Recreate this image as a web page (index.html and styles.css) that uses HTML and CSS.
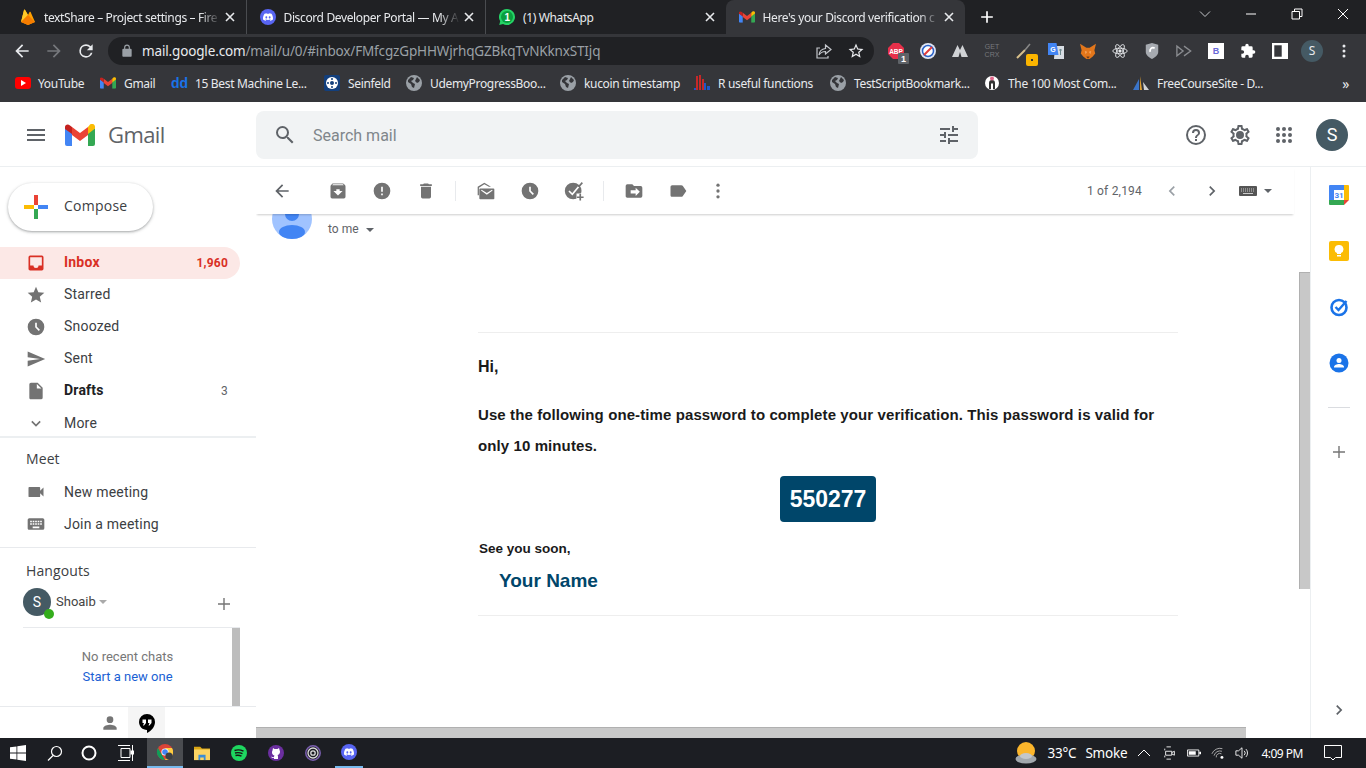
FILE: index.html
```html
<!DOCTYPE html>
<html lang="en">
<head>
    <meta charset="UTF-8">
    <title>Here's your Discord verification code - Gmail</title>
    <link rel="stylesheet" href="styles.css">
</head>
<body>
    <svg class="defs" width="0" height="0">
        <symbol id="discord" viewBox="0 0 24 24"><path d="M20.317 4.37a19.791 19.791 0 0 0-4.885-1.515.074.074 0 0 0-.079.037c-.21.375-.444.864-.608 1.25a18.27 18.27 0 0 0-5.487 0 12.64 12.64 0 0 0-.617-1.25.077.077 0 0 0-.079-.037A19.736 19.736 0 0 0 3.677 4.37a.07.07 0 0 0-.032.027C.533 9.046-.32 13.58.099 18.057a.082.082 0 0 0 .031.057 19.9 19.9 0 0 0 5.993 3.03.078.078 0 0 0 .084-.028 14.09 14.09 0 0 0 1.226-1.994.076.076 0 0 0-.041-.106 13.107 13.107 0 0 1-1.872-.892.077.077 0 0 1-.008-.128 10.2 10.2 0 0 0 .372-.292.074.074 0 0 1 .077-.01c3.928 1.793 8.18 1.793 12.062 0a.074.074 0 0 1 .078.01c.12.098.246.198.373.292a.077.077 0 0 1-.006.127 12.299 12.299 0 0 1-1.873.892.077.077 0 0 0-.041.107c.36.698.772 1.362 1.225 1.993a.076.076 0 0 0 .084.028 19.839 19.839 0 0 0 6.002-3.03.077.077 0 0 0 .032-.054c.5-5.177-.838-9.674-3.549-13.66a.061.061 0 0 0-.031-.03zM8.02 15.33c-1.183 0-2.157-1.085-2.157-2.419 0-1.333.956-2.419 2.157-2.419 1.21 0 2.176 1.096 2.157 2.42 0 1.333-.956 2.418-2.157 2.418zm7.975 0c-1.183 0-2.157-1.085-2.157-2.419 0-1.333.955-2.419 2.157-2.419 1.21 0 2.176 1.096 2.157 2.42 0 1.333-.946 2.418-2.157 2.418z"/></symbol>
        <symbol id="m-logo" viewBox="0 0 30 22">
            <path fill="#4285f4" d="M0 4v16a2 2 0 0 0 2 2h5V9z"/>
            <path fill="#34a853" d="M23 9v13h5a2 2 0 0 0 2-2V4z"/>
            <path fill="#ea4335" d="M7 11V3l8 6 8-6v8l-8 6z"/>
            <path fill="#fbbc04" d="M23 3v7l7-5.500V3c0-3-3-4-5-2.500z"/>
            <path fill="#c5221f" d="M0 3v2l7 5V3L5 1.500C3-.2 0 .6 0 3z"/>
        </symbol>
        <symbol id="globe" viewBox="0 0 16 16">
            <circle cx="8" cy="8" r="8" fill="#9aa0a6"/>
            <path fill="#35363a" d="M2 5l3-3 3 1-1 2-2 1 2 2 2 1-1 4-2-1-1-3-3-2zM11 2l3 3-1 2-2 1-2-2 1-2z"/>
        </symbol>
        <symbol id="gear" viewBox="0 0 24 24"><path d="M19.430 12.980c.04-.32.07-.64.07-.98s-.03-.66-.07-.98l2.110-1.650c.19-.15.24-.42.12-.64l-2-3.460c-.12-.22-.39-.3-.61-.22l-2.490 1c-.52-.4-1.080-.73-1.690-.98l-.38-2.650C14.460 2.180 14.250 2 14 2h-4c-.25 0-.46.18-.49.42l-.38 2.650c-.61.25-1.170.59-1.690.98l-2.490-1c-.23-.09-.49 0-.61.22l-2 3.460c-.13.22-.07.49.12.64l2.110 1.650c-.04.32-.07.65-.07.98s.03.66.07.98l-2.110 1.650c-.19.15-.24.42-.12.64l2 3.460c.12.22.39.3.61.22l2.490-1c.52.4 1.080.73 1.690.98l.38 2.650c.03.24.24.42.49.42h4c.25 0 .46-.18.49-.42l.38-2.650c.61-.25 1.170-.59 1.690-.98l2.490 1c.23.09.49 0 .61-.22l2-3.460c.12-.22.07-.49-.12-.64zm-1.980-1.710c.04.31.05.52.05.73s-.02.43-.05.73l-.14 1.130.89.7 1.080.84-.7 1.210-1.270-.51-1.040-.42-.9.68c-.43.32-.84.56-1.250.73l-1.060.43-.16 1.130-.2 1.350h-1.400l-.19-1.350-.16-1.130-1.060-.43c-.43-.18-.83-.41-1.230-.71l-.91-.7-1.060.43-1.270.51-.7-1.210 1.080-.84.89-.7-.14-1.130c-.03-.31-.05-.54-.05-.74s.02-.43.05-.73l.14-1.130-.89-.7-1.080-.84.7-1.210 1.270.51 1.040.42.9-.68c.43-.32.84-.56 1.250-.73l1.060-.43.16-1.130.2-1.350h1.390l.19 1.350.16 1.130 1.060.43c.43.18.83.41 1.230.71l.91.7 1.060-.43 1.270-.51.7 1.210-1.070.85-.89.7zM12 8a4 4 0 1 0 0 8 4 4 0 0 0 0-8z"/></symbol>
        <symbol id="tab-close" viewBox="0 0 10 10"><path fill="none" stroke="#e8eaed" stroke-width="1.600" d="M1 1l8 8M9 1L1 9"/></symbol>
    </svg>

    <!-- browser tabs -->
    <div class="tabstrip">
        <div class="tab">
            <svg class="fav" viewBox="0 0 16 16"><path fill="#ffa000" d="M1 13L4 1c.2-.7.8-.7 1.100 0L8 6l1.500-3c.3-.5.8-.5 1.100 0L15 13l-7 3z"/><path fill="#ffca28" d="M1 13L8 6 5.100 1C4.800.3 4.200.3 4 1z"/><path fill="#f57c00" d="M1 13l7 3 7-3L8 6z"/></svg>
            <span class="tab-title">textShare – Project settings – Fire</span>
            <svg class="tab-x"><use href="#tab-close"/></svg>
        </div>
        <div class="tab">
            <svg class="fav" viewBox="0 0 16 16"><circle cx="8" cy="8" r="8" fill="#5865f2"/><svg x="3" y="3" width="10" height="10" fill="#fff"><use href="#discord"/></svg></svg>
            <span class="tab-title">Discord Developer Portal — My A</span>
            <svg class="tab-x"><use href="#tab-close"/></svg>
        </div>
        <div class="tab">
            <svg class="fav" viewBox="0 0 16 16"><path fill="#25d366" d="M8 0a8 8 0 0 0-6.800 12.200L.2 16l3.900-1A8 8 0 1 0 8 0z"/><circle cx="8" cy="8" r="6" fill="#0a9e3f"/><text x="8" y="11.500" class="fav-num">1</text></svg>
            <span class="tab-title">(1) WhatsApp</span>
            <svg class="tab-x"><use href="#tab-close"/></svg>
        </div>
        <div class="tab active">
            <svg class="fav" viewBox="0 0 30 22"><use href="#m-logo"/></svg>
            <span class="tab-title">Here's your Discord verification c</span>
            <svg class="tab-x"><use href="#tab-close"/></svg>
        </div>
        <svg class="newtab" viewBox="0 0 24 24" fill="#fff"><path d="M19 13h-6v6h-2v-6H5v-2h6V5h2v6h6z"/></svg>
        <div class="winbtns">
            <svg viewBox="0 0 12 12" fill="none" stroke="#c4c6ca"><path d="M1 3.500l5 5 5-5"/></svg>
            <svg viewBox="0 0 12 12" fill="none" stroke="#fff"><path d="M1 6h10"/></svg>
            <svg viewBox="0 0 12 12" fill="none" stroke="#fff"><path d="M1 3.500h7.500V11H1zM3.500 3.500V1H11v7.500H8.500"/></svg>
            <svg viewBox="0 0 12 12" fill="none" stroke="#fff"><path d="M1 1l10 10M11 1L1 11"/></svg>
        </div>
    </div>

    <!-- address bar -->
    <div class="toolbar">
        <svg class="nav-ic" viewBox="0 0 24 24" fill="#e8eaed"><path d="M20 11H7.830l5.590-5.590L12 4l-8 8 8 8 1.410-1.410L7.830 13H20z"/></svg>
        <svg class="nav-ic" viewBox="0 0 24 24" fill="#76787c"><path d="M12 4l-1.410 1.410L16.170 11H4v2h12.170l-5.580 5.590L12 20l8-8z"/></svg>
        <svg class="nav-ic" viewBox="0 0 24 24" fill="#e8eaed"><path d="M17.650 6.350A7.960 7.960 0 0 0 12 4a8 8 0 1 0 7.730 10h-2.080A6 6 0 1 1 12 6c1.660 0 3.140.69 4.220 1.780L13 11h7V4z"/></svg>
        <div class="omnibox">
            <svg class="lock" viewBox="0 0 24 24" fill="#9aa0a6"><path d="M18 8h-1V6A5 5 0 0 0 7 6v2H6a2 2 0 0 0-2 2v10c0 1.100.9 2 2 2h12a2 2 0 0 0 2-2V10a2 2 0 0 0-2-2zM9 6a3 3 0 0 1 6 0v2H9z"/></svg>
            <span class="url"><span class="host">mail.google.com</span>/mail/u/0/#inbox/FMfcgzGpHHWjrhqGZBkqTvNKknxSTIjq</span>
            <svg class="omni-ic" viewBox="0 0 18 18" fill="none" stroke="#c4c7cc" stroke-width="1.200"><path d="M10.500 3l5.500 4.500-5.500 4.500V9.500c-3 0-5 1-6.500 3.500.3-3.500 2.500-6 6.500-6.500zM13 14v2H2V6h3"/></svg>
            <svg class="omni-ic star" viewBox="0 0 24 24" fill="#e8eaed"><path d="M22 9.240l-7.190-.62L12 2 9.190 8.630 2 9.240l5.460 4.730L5.820 21 12 17.270 18.180 21l-1.630-7.030zM12 15.400l-3.760 2.270 1-4.280-3.320-2.880 4.380-.38L12 6.100l1.710 4.040 4.380.38-3.320 2.880 1 4.280z"/></svg>
        </div>
        <div class="exts">
            <div class="ext"><svg viewBox="0 0 16 16"><path fill="#e8304a" d="M5 0h6l5 5v6l-5 5H5l-5-5V5z"/><text x="8" y="10.500" class="abp">ABP</text><rect x="10" y="10" width="11" height="11" rx="1" fill="#5f6368"/><text x="15.500" y="19" class="abp-n">1</text></svg></div>
            <div class="ext"><svg viewBox="0 0 16 16"><circle cx="8" cy="8" r="8" fill="#dfe6f5"/><circle cx="8" cy="8" r="5.500" fill="#fff" stroke="#2a62c8" stroke-width="1.500"/><path stroke="#e23b3b" stroke-width="2" d="M4 12l8-8"/></svg></div>
            <div class="ext"><svg viewBox="0 0 16 16"><path fill="#d0d2d5" d="M0 14L5.500 2 8 7l2.500-5L16 14H9.500L8 9l-1.500 5z"/></svg></div>
            <div class="ext"><span class="getcrx">GET<br>CRX</span></div>
            <div class="ext"><svg viewBox="0 0 16 16"><path stroke="#d8c08a" stroke-width="2" d="M1 15l8-8"/><path stroke="#888" stroke-width="1.500" d="M9 7l5-6"/><rect x="10" y="11" width="12" height="12" rx="2" fill="#fbb500"/><rect x="15" y="16" width="2" height="2" fill="#333"/></svg></div>
            <div class="ext"><svg viewBox="0 0 16 16"><path fill="#d8dde3" d="M7 3h9v13H6z"/><path fill="#4285f4" d="M0 0h8.500l2 12H0z"/><text x="5" y="8.500" class="gt">G</text><path stroke="#6f8b8f" d="M11 7h3M12.500 6v6"/></svg></div>
            <div class="ext"><svg viewBox="0 0 20 20"><path fill="#e2761b" d="M0 1l8 5h4l8-5-2 8 1 4-3 4-4 3H8l-4-3-3-4 1-4z"/><path fill="#f6a45c" d="M6 10l3 1-2 3zM14 10l-3 1 2 3z"/><path fill="#763d16" d="M8 17h4l-1 2H9z"/></svg></div>
            <div class="ext"><svg viewBox="0 0 20 20" fill="none" stroke="#e8eaed" stroke-width="1.100"><ellipse cx="10" cy="10" rx="9" ry="3.500"/><ellipse cx="10" cy="10" rx="9" ry="3.500" transform="rotate(60 10 10)"/><ellipse cx="10" cy="10" rx="9" ry="3.500" transform="rotate(120 10 10)"/><circle cx="10" cy="10" r="1.500" fill="#e8eaed"/></svg></div>
            <div class="ext"><svg viewBox="0 0 16 18"><path fill="#a6aab0" d="M1 2l7-2 7 2v8c0 4-4 6-7 8-3-2-7-4-7-8z"/><path fill="none" stroke="#fff" stroke-width="2" d="M11 6c-3-2-6 1-5 4"/></svg></div>
            <div class="ext"><svg viewBox="0 0 18 14" fill="none" stroke="#8a8c90" stroke-width="1.500"><path d="M1 1.500l7 5.500-7 5.500zM9 1.500l7.500 5.500-7.500 5.500"/></svg></div>
            <div class="ext"><span class="bs-ext">B</span></div>
            <div class="ext"><svg viewBox="0 0 24 24" fill="#fff"><path d="M20.500 11H19V7a2 2 0 0 0-2-2h-4V3.500a2.500 2.500 0 0 0-5 0V5H4a2 2 0 0 0-2 2v3.800h1.500a2.700 2.700 0 0 1 0 5.400H2V20c0 1.100.9 2 2 2h3.800v-1.500a2.700 2.700 0 0 1 5.400 0V22H17a2 2 0 0 0 2-2v-4h1.500a2.500 2.500 0 0 0 0-5z"/></svg></div>
            <div class="ext"><svg viewBox="0 0 14 14"><path fill="#fff" d="M0 0h14v14H0z"/><path fill="#35363a" d="M2 2h6.500v10H2z"/></svg></div>
            <div class="ext"><span class="ava-s">S</span></div>
            <div class="ext"><svg viewBox="0 0 16 16" fill="#e8eaed"><circle cx="8" cy="3" r="1.500"/><circle cx="8" cy="8" r="1.500"/><circle cx="8" cy="13" r="1.500"/></svg></div>
        </div>
    </div>

    <!-- bookmarks -->
    <div class="bookmarks">
        <div class="bm"><svg viewBox="0 0 16 12"><rect width="16" height="12" rx="3" fill="#f00"/><path fill="#fff" d="M6 3l5 3-5 3z"/></svg><span>YouTube</span></div>
        <div class="bm"><svg viewBox="0 0 30 22"><use href="#m-logo"/></svg><span>Gmail</span></div>
        <div class="bm"><b class="dd">dd</b><span>15 Best Machine Le...</span></div>
        <div class="bm"><svg viewBox="0 0 16 16"><rect width="16" height="16" rx="2" fill="#123f7d"/><circle cx="8" cy="8" r="6" fill="#fff"/><circle cx="8" cy="8" r="2" fill="#123f7d"/><circle cx="8" cy="4" r="1" fill="#123f7d"/><circle cx="12" cy="8" r="1" fill="#123f7d"/><circle cx="8" cy="12" r="1" fill="#123f7d"/><circle cx="4" cy="8" r="1" fill="#123f7d"/></svg><span>Seinfeld</span></div>
        <div class="bm"><svg viewBox="0 0 16 16"><use href="#globe"/></svg><span>UdemyProgressBoo...</span></div>
        <div class="bm"><svg viewBox="0 0 16 16"><use href="#globe"/></svg><span>kucoin timestamp</span></div>
        <div class="bm"><svg viewBox="0 0 16 16"><path fill="#c62828" d="M2 1h2v14H2zM5 0h2v15H5zM8 4h2v11H8z"/><path fill="#1e58c8" d="M10 8h2v7h-2zM13 11h3v4h-3zM0 13h2v2H0z"/></svg><span>R useful functions</span></div>
        <div class="bm"><svg viewBox="0 0 16 16"><use href="#globe"/></svg><span>TestScriptBookmark...</span></div>
        <div class="bm"><svg viewBox="0 0 16 16"><circle cx="8" cy="8" r="7" fill="#fff"/><path fill="#333" d="M5 14V8a3 3 0 0 1 6 0v6H9V8.500H7V14z"/><circle cx="8" cy="3.500" r="2" fill="#e0668a"/></svg><span>The 100 Most Com...</span></div>
        <div class="bm"><svg viewBox="0 0 16 16"><path fill="#3a74c8" d="M0 15L6 4v11z"/><path fill="#e0a030" d="M7 1l2 14H7z"/><path fill="#d0d2d5" d="M10 7l6 8h-5z"/></svg><span>FreeCourseSite - D...</span></div>
        <span class="bm-more">»</span>
    </div>

    <!-- gmail header -->
    <header class="gm-header">
        <div class="gm-brand">
            <svg class="ic24" viewBox="0 0 24 24" fill="#5f6368"><path d="M3 18h18v-2H3zm0-5h18v-2H3zm0-7v2h18V6z"/></svg>
            <svg class="gm-logo" viewBox="0 0 30 22"><use href="#m-logo"/></svg>
            <span class="gm-word">Gmail</span>
        </div>
        <div class="search">
            <svg class="ic24" viewBox="0 0 24 24" fill="#5f6368"><path d="M15.500 14h-.79l-.28-.27A6.470 6.470 0 0 0 16 9.500 6.500 6.500 0 1 0 9.500 16c1.610 0 3.090-.59 4.230-1.570l.27.28v.79l5 4.990L20.490 19zm-6 0a4.500 4.500 0 1 1 0-9 4.500 4.500 0 0 1 0 9z"/></svg>
            <span class="search-text">Search mail</span>
            <svg class="ic24" viewBox="0 0 24 24" fill="#5f6368"><path d="M3 17v2h6v-2zM3 5v2h10V5zm10 16v-2h8v-2h-8v-2h-2v6zM7 9v2H3v2h4v2h2V9zm14 4v-2H11v2zm-6-4h2V7h4V5h-4V3h-2z"/></svg>
        </div>
        <div class="gm-actions">
            <svg class="ic24" viewBox="0 0 24 24" fill="#5f6368"><path d="M11 18h2v-2h-2zm1-16a10 10 0 1 0 0 20 10 10 0 0 0 0-20zm0 18a8 8 0 1 1 0-16 8 8 0 0 1 0 16zm0-14a4 4 0 0 0-4 4h2a2 2 0 0 1 4 0c0 2-3 1.750-3 5h2c0-2.250 3-2.500 3-5a4 4 0 0 0-4-4z"/></svg>
            <svg class="ic24" fill="#5f6368"><use href="#gear"/></svg>
            <svg class="ic24" viewBox="0 0 24 24" fill="#5f6368"><circle cx="6" cy="6" r="2"/><circle cx="12" cy="6" r="2"/><circle cx="18" cy="6" r="2"/><circle cx="6" cy="12" r="2"/><circle cx="12" cy="12" r="2"/><circle cx="18" cy="12" r="2"/><circle cx="6" cy="18" r="2"/><circle cx="12" cy="18" r="2"/><circle cx="18" cy="18" r="2"/></svg>
            <span class="gm-avatar">S</span>
        </div>
    </header>

    <div class="gm-main">
        <aside class="sidebar">
            <button class="compose">
                <svg viewBox="0 0 24 24" class="compose-plus"><path fill="#ea4335" d="M10 0h4v10h-4z"/><path fill="#4285f4" d="M14 10h10v4H14z"/><path fill="#34a853" d="M10 14h4v10h-4z"/><path fill="#fbbc04" d="M0 10h10v4H0z"/></svg>
                <span class="compose-text">Compose</span>
            </button>
            <nav class="labels">
                <a class="label on"><svg viewBox="0 0 24 24" fill="#d93025"><path d="M19 3H5a2 2 0 0 0-2 2v14c0 1.100.9 2 2 2h14a2 2 0 0 0 2-2V5a2 2 0 0 0-2-2zm0 12h-4a3 3 0 0 1-6 0H5V5h14z"/></svg>Inbox<em>1,960</em></a>
                <a class="label"><svg viewBox="0 0 24 24" fill="#737373"><path d="M12 17.270L18.180 21l-1.640-7.030L22 9.240l-7.190-.61L12 2 9.190 8.630 2 9.240l5.460 4.730L5.820 21z"/></svg>Starred</a>
                <a class="label"><svg viewBox="0 0 24 24" fill="#737373"><path d="M12 2a10 10 0 1 0 0 20 10 10 0 0 0 0-20zm3.300 14.710L11 12.410V7h2v4.590l3.710 3.710z"/></svg>Snoozed</a>
                <a class="label"><svg viewBox="0 0 24 24" fill="#737373"><path d="M2.010 21L23 12 2.010 3 2 10l15 2-15 2z"/></svg>Sent</a>
                <a class="label bold"><svg viewBox="0 0 24 24" fill="#737373"><path d="M14 2H6a2 2 0 0 0-2 2v16c0 1.100.9 2 2 2h12a2 2 0 0 0 2-2V8zm-1 7V3.500L18.500 9z"/></svg>Drafts<em>3</em></a>
                <a class="label"><svg viewBox="0 0 24 24" fill="none" stroke="#737373" stroke-width="2"><path d="M7 10l5 5 5-5"/></svg>More</a>
            </nav>
            <section class="meet">
                <h3>Meet</h3>
                <a class="label"><svg viewBox="0 0 24 24" fill="#737373"><path d="M17 10.500V7a1 1 0 0 0-1-1H4a1 1 0 0 0-1 1v10a1 1 0 0 0 1 1h12a1 1 0 0 0 1-1v-3.500l4 4v-11z"/></svg>New meeting</a>
                <a class="label"><svg viewBox="0 0 24 24" fill="#737373"><path d="M20 5H4a2 2 0 0 0-2 2v10c0 1.100.9 2 2 2h16a2 2 0 0 0 2-2V7a2 2 0 0 0-2-2zm-9 3h2v2h-2zm0 3h2v2h-2zM8 8h2v2H8zm0 3h2v2H8zm-1 2H5v-2h2zm0-3H5V8h2zm9 7H8v-2h8zm0-4h-2v-2h2zm0-3h-2V8h2zm3 3h-2v-2h2zm0-3h-2V8h2z"/></svg>Join a meeting</a>
            </section>
            <section class="hangouts">
                <h3>Hangouts</h3>
                <div class="hg-user">
                    <span class="hg-avatar">S<i></i></span>
                    <span class="hg-name">Shoaib</span>
                    <span class="caret"></span>
                    <svg class="hg-plus" viewBox="0 0 14 14" fill="#757575"><path d="M6.300 1h1.400v5.300H13v1.400H7.700V13H6.300V7.700H1V6.300h5.300z"/></svg>
                </div>
                <div class="hg-list">
                    <div class="hg-empty">No recent chats<a>Start a new one</a></div>
                    <div class="hg-thumb"></div>
                </div>
            </section>
            <div class="hg-tabs">
                <span class="hg-tab"><svg class="ic20" viewBox="0 0 24 24" fill="#757575"><path d="M12 12a4 4 0 1 0 0-8 4 4 0 0 0 0 8zm0 2c-2.670 0-8 1.340-8 4v2h16v-2c0-2.660-5.330-4-8-4z"/></svg></span>
                <span class="hg-tab on"><svg class="ic24" viewBox="0 0 24 24"><path fill="#000" d="M12 3a8 8 0 0 0-8 8c0 4.400 3.600 8 8 8v3c4-2 8-6 8-11a8 8 0 0 0-8-8z"/><path fill="#fff" d="M7.500 8.500h3.500V12l-2 2.500H8l1-2.500H7.500zM13 8.500h3.500V12l-2 2.500h-1l1-2.500H13z"/></svg></span>
            </div>
        </aside>

        <main class="content">
            <div class="mail-tools">
                <svg class="ic20 back" viewBox="0 0 24 24" fill="#5f6368"><path d="M20 11H7.830l5.590-5.590L12 4l-8 8 8 8 1.410-1.410L7.830 13H20z"/></svg>
                <div class="tool-group">
                    <svg class="ic20" viewBox="0 0 24 24" fill="#737373"><path d="M20.540 5.230l-1.390-1.680A1.500 1.500 0 0 0 18 3H6c-.47 0-.88.21-1.160.55L3.460 5.230C3.170 5.570 3 6.020 3 6.500V19a2 2 0 0 0 2 2h14a2 2 0 0 0 2-2V6.500c0-.48-.17-.93-.46-1.270zM12 17.500L6.500 12H10v-2h4v2h3.500zM5.120 5l.81-1h12l.94 1z"/></svg>
                    <svg class="ic20" viewBox="0 0 24 24" fill="#737373"><path d="M12 2a10 10 0 1 0 0 20 10 10 0 0 0 0-20zm1 15h-2v-2h2zm0-4h-2V7h2z"/></svg>
                    <svg class="ic20" viewBox="0 0 24 24" fill="#737373"><path d="M6 19a2 2 0 0 0 2 2h8a2 2 0 0 0 2-2V7H6zM19 4h-3.500l-1-1h-5l-1 1H5v2h14z"/></svg>
                </div>
                <div class="tool-group">
                    <svg class="ic20" viewBox="0 0 24 24" fill="#737373"><path d="M5 9h16a1 1 0 0 1 1 1v11a1 1 0 0 1-1 1H5a1 1 0 0 1-1-1V10a1 1 0 0 1 1-1zm1 2.500l7 5 7-5-.8-1-6.200 4-6.200-4z"/><path d="M2 7l8-5 8 5h-2.500L10 4 3.500 8v9H2z"/></svg>
                    <svg class="ic20" viewBox="0 0 24 24" fill="#737373"><path d="M12 2a10 10 0 1 0 0 20 10 10 0 0 0 0-20zm3.300 14.710L11 12.410V7h2v4.590l3.710 3.710z"/></svg>
                    <svg class="ic20" viewBox="0 0 24 24"><circle cx="11" cy="12" r="10" fill="#737373"/><path fill="none" stroke="#fff" stroke-width="2" d="M6 12l4 4 7.500-9"/><path fill="none" stroke="#737373" stroke-width="2" d="M17.500 7L22 2"/><path fill="#fff" d="M15 15h9v9h-9z"/><path fill="#737373" d="M18.500 15.500h2v3h3v2h-3v3h-2v-3h-3v-2h3z"/></svg>
                </div>
                <div class="tool-group last">
                    <svg class="ic20" viewBox="0 0 24 24" fill="#737373"><path d="M20 6h-8l-2-2H4a2 2 0 0 0-2 2v12c0 1.100.9 2 2 2h16a2 2 0 0 0 2-2V8a2 2 0 0 0-2-2zm-6 12v-3H8v-4h6V8l5 5z"/></svg>
                    <svg class="ic20" viewBox="0 0 24 24" fill="#737373"><path d="M17.630 5.840A2 2 0 0 0 16 5L5 5.010A2 2 0 0 0 3 7v10c0 1.100.9 1.990 2 1.990L16 19c.67 0 1.270-.33 1.630-.84L22 12z"/></svg>
                    <svg class="ic20 dots" viewBox="0 0 24 24" fill="#737373"><circle cx="12" cy="5" r="2"/><circle cx="12" cy="12" r="2"/><circle cx="12" cy="19" r="2"/></svg>
                </div>
                <span class="pager">1 of 2,194</span>
                <svg class="ic20 pg-ic" viewBox="0 0 24 24" fill="#9aa0a6"><path d="M15.410 7.410L14 6l-6 6 6 6 1.410-1.410L10.830 12z"/></svg>
                <svg class="ic20 pg-ic" viewBox="0 0 24 24" fill="#5f6368"><path d="M10 6L8.590 7.410 13.170 12l-4.580 4.590L10 18l6-6z"/></svg>
                <svg class="kbd" viewBox="0 0 18 10"><rect width="18" height="10" rx="1" fill="#555"/><path stroke="#ccc" stroke-dasharray="1 1" d="M2 3h14M2 5h14"/><path stroke="#ccc" d="M4 7.500h10"/></svg>
                <span class="caret"></span>
            </div>

            <div class="mail-scroll">
                <div class="sender">
                    <svg class="sender-pic" viewBox="0 0 40 40"><circle cx="20" cy="20" r="20" fill="#a0c3ff"/><circle cx="20" cy="15" r="7" fill="#4285f4"/><ellipse cx="20" cy="33" rx="13" ry="7" fill="#4285f4"/></svg>
                    <span class="to-me">to me</span>
                    <span class="caret"></span>
                </div>
                <article class="message">
                    <p class="hi">Hi,</p>
                    <p class="lead">Use the following one-time password to complete your verification. This password is valid for only 10 minutes.</p>
                    <div class="otp-row"><span class="otp">550277</span></div>
                    <p class="bye">See you soon,</p>
                    <p class="sign">Your Name</p>
                </article>
            </div>
            <div class="v-thumb"></div>
            <div class="h-thumb"></div>
        </main>

        <aside class="rail">
            <svg class="rail-ic" viewBox="0 0 20 20"><path fill="#4285f4" d="M1 0h14v5H5v10H0V1a1 1 0 0 1 1-1z"/><path fill="#fbbc04" d="M15 0h4a1 1 0 0 1 1 1v14h-5z"/><path fill="#34a853" d="M0 15h15v5H1a1 1 0 0 1-1-1z"/><path fill="#ea4335" d="M15 15h5l-5 5z"/><path fill="#fff" d="M5 5h10v10H5z"/><text x="10" y="13" class="cal">31</text></svg>
            <svg class="rail-ic" viewBox="0 0 20 20"><rect width="20" height="20" rx="2" fill="#fbbc04"/><path fill="#fff" d="M10 4a4.200 4.200 0 0 0-2 8v1h4v-1a4.200 4.200 0 0 0-2-8zM8 14h4v1.500H8z"/></svg>
            <svg class="rail-ic" viewBox="0 0 20 20" fill="none"><circle cx="10" cy="10.500" r="7.500" stroke="#1a73e8" stroke-width="2.600"/><path d="M6.500 10l3 3 8-9" stroke="#1a73e8" stroke-width="2.400"/></svg>
            <svg class="rail-ic" viewBox="0 0 20 20"><circle cx="10" cy="10" r="9.500" fill="#1a73e8"/><circle cx="10" cy="7.500" r="2.500" fill="#fff"/><path fill="#fff" d="M5 14c0-2 3-3 5-3s5 1 5 3v.5H5z"/></svg>
            <hr class="rail-sep">
            <svg class="rail-add" viewBox="0 0 14 14" fill="#757575"><path d="M6.300 1h1.400v5.300H13v1.400H7.700V13H6.300V7.700H1V6.300h5.300z"/></svg>
            <svg class="rail-more" viewBox="0 0 24 24" fill="#5f6368"><path d="M10 6L8.590 7.410 13.170 12l-4.580 4.590L10 18l6-6z"/></svg>
        </aside>
    </div>

    <!-- windows taskbar -->
    <footer class="taskbar">
        <div class="tb-apps">
            <span class="tb-app"><svg viewBox="0 0 16 16" fill="#fff"><path d="M0 2.300l6.500-.9v6.200H0zM7.300 1.300L16 0v7.600H7.300zM0 8.400h6.500v6.200L0 13.700zM7.300 8.400H16V16l-8.700-1.300z"/></svg></span>
            <span class="tb-app"><svg viewBox="0 0 16 16" fill="none" stroke="#fff" stroke-width="1.200"><circle cx="9.500" cy="6.500" r="5"/><path d="M6 10.500L1 15.500"/></svg></span>
            <span class="tb-app"><svg viewBox="0 0 16 16" fill="none" stroke="#fff" stroke-width="2"><circle cx="8" cy="8" r="6.500"/></svg></span>
            <span class="tb-app"><svg viewBox="0 0 16 16" fill="none" stroke="#fff"><path d="M0 .5h12M3 3.500h9v9H3zM0 15.500h12M14.500 0v6M14.500 9v7"/><rect x="13" y="6" width="3" height="3" fill="#fff"/></svg></span>
            <span class="tb-app run"><svg viewBox="0 0 20 20"><circle cx="10" cy="10" r="10" fill="#db4437"/><path fill="#0f9d58" d="M10 20A10 10 0 0 1 1.300 5l5 9z"/><path fill="#ffcd40" d="M10 5h8.700A10 10 0 0 1 10 20l5-8z"/><circle cx="10" cy="10" r="4.500" fill="#fff"/><circle cx="10" cy="10" r="3.500" fill="#4285f4"/><circle cx="15" cy="15" r="4.500" fill="#3c4043"/></svg></span>
            <span class="tb-app"><svg viewBox="0 0 18 16"><path fill="#d9a514" d="M0 1h7l2 2h9v3H0z"/><path fill="#fcd463" d="M0 4h18v12H0z"/><path fill="#3b8dd6" d="M5 10h8v6h-2v-3H7v3H5z"/></svg></span>
            <span class="tb-app"><svg viewBox="0 0 16 16"><circle cx="8" cy="8" r="8" fill="#1ed760"/><path fill="none" stroke="#191414" stroke-width="1.400" d="M3.500 5.500c3-1 6-.8 9 .7M4 8c2.500-.7 5-.5 7.500.7M4.500 10.500c2-.5 4-.4 6 .6"/></svg></span>
            <span class="tb-app"><svg viewBox="0 0 16 16"><circle cx="8" cy="8" r="8" fill="#6b2fa0"/><path fill="#fff" d="M5 3l1.500 1h3L11 3l.5 2c1 1.500.6 4.500-2 5 .4.400.5.900.5 1.500V14H6v-1c-1.500.3-2.300-.4-3-1.500 1 .3 2 1 3 .5 0-.6.1-1.100.5-1.500-2.600-.5-3-3.500-2-5z"/></svg></span>
            <span class="tb-app"><svg viewBox="0 0 16 16" fill="none"><circle cx="8" cy="8" r="7.200" stroke="#7a5fb0" stroke-width="1.500"/><circle cx="8" cy="8" r="5" stroke="#ddd" stroke-width="1.300"/><circle cx="8" cy="8" r="2.200" stroke="#ddd" stroke-width="1.300"/></svg></span>
            <span class="tb-app run2"><svg viewBox="0 0 16 16"><circle cx="8" cy="8" r="8" fill="#5865f2"/><svg x="3" y="3" width="10" height="10" fill="#fff"><use href="#discord"/></svg></svg></span>
        </div>
        <div class="tb-tray">
            <svg class="weather" viewBox="0 0 22 22"><circle cx="11" cy="9" r="9" fill="#fbb52b"/><path fill="#e8792a" d="M2 9a9 9 0 0 1 18 0 5 5 0 0 0-18 0z" opacity=".5"/><ellipse cx="11" cy="17" rx="10.500" ry="4.500" fill="#a2a8ad"/><ellipse cx="11" cy="14" rx="6" ry="3" fill="#c4c7ca"/></svg>
            <span class="temp">33°C</span>
            <span class="smoke">Smoke</span>
            <svg class="tray-ic first" viewBox="0 0 14 14" fill="none" stroke="#fff"><path d="M1 10l6-6 6 6"/></svg>
            <svg class="tray-ic" viewBox="0 0 16 16" fill="none" stroke="#fff"><path d="M4 1h5M4 15h5M2 3v2M2 11v2M3 6h7v4.500H3zM10 7.500l3-1.500v4.500l-3-1.500"/></svg>
            <svg class="tray-ic" viewBox="0 0 16 16"><path fill="none" stroke="#fff" d="M.5 4.500h13v7H.5z"/><path fill="#fff" d="M2 6h8v4H2zM14 6.500h2v3h-2z"/></svg>
            <svg class="tray-ic" viewBox="0 0 16 16" fill="none" stroke="#b8b8b8"><path d="M1 9a10 10 0 0 1 12-6M3.500 11a7 7 0 0 1 9-5M6 13a4 4 0 0 1 6-4"/><circle cx="12.500" cy="13" r="1.700" fill="#fff" stroke="none"/></svg>
            <svg class="tray-ic" viewBox="0 0 16 16" fill="none" stroke="#fff"><path d="M1 5.500h3L8 2v12l-4-3.500H1zM10.500 5.500a3.500 3.500 0 0 1 0 5M12.500 3.500a6.500 6.500 0 0 1 0 9"/></svg>
            <span class="clock">4:09 PM</span>
            <svg class="notif" viewBox="0 0 18 16" fill="none" stroke="#fff"><path d="M.5.500h17v12h-6L9 15l-2.500-2.500h-6z"/></svg>
        </div>
    </footer>
</body>
</html>
```

FILE: styles.css
```css
* {
    box-sizing: border-box;
}

html, body {
    margin: 0;
    height: 768px;
    overflow: hidden;
}

body {
    width: 1366px;
    display: flex;
    flex-direction: column;
    font-family: Roboto, Arial, sans-serif;
    background-color: #fff;
}

svg {
    display: block;
    flex-shrink: 0;
}

.defs {
    position: absolute;
}

p, h3 {
    margin: 0;
}

/* chrome */
.tabstrip {
    height: 34px;
    flex-shrink: 0;
    background-color: #202124;
    display: flex;
    align-items: flex-end;
    padding-left: 7px;
    font-family: "Noto Sans", sans-serif;
    font-size: 12px;
    letter-spacing: -0.37px;
}

.tab {
    width: 239.5px;
    height: 34px;
    display: flex;
    align-items: center;
    padding: 0 11px 0 13px;
    color: #e8eaed;
    border-right: 1px solid #4a4c50;
}

.tab:nth-child(3) {
    border-right: none;
}

.tab.active {
    background-color: #35363a;
    border-radius: 8px 8px 0 0;
    border-right: none;
}

.fav {
    width: 16px;
    height: 16px;
    margin-right: 8px;
}

.fav-num {
    font: bold 10px "Liberation Sans", sans-serif;
    fill: #fff;
    text-anchor: middle;
}

.tab-title {
    flex: 1;
    min-width: 0;
    white-space: nowrap;
    overflow: hidden;
    -webkit-mask-image: linear-gradient(to right, #000 88%, transparent);
    mask-image: linear-gradient(to right, #000 88%, transparent);
}

.tab:nth-child(3) .tab-title {
    -webkit-mask-image: none;
    mask-image: none;
}

.tab-x {
    width: 10px;
    height: 10px;
    margin-left: 4px;
}

.newtab {
    width: 20px;
    height: 20px;
    margin: 0 0 7px 12px;
}

.winbtns {
    margin-left: auto;
    height: 34px;
    display: flex;
    align-items: flex-start;
    padding: 8px 17px 0 0;
    gap: 34px;
}

.winbtns svg {
    width: 12px;
    height: 12px;
}

.toolbar {
    height: 34px;
    flex-shrink: 0;
    background-color: #35363a;
    display: flex;
    align-items: center;
    padding-left: 6px;
}

.nav-ic {
    width: 20px;
    height: 20px;
    margin: 0 6px;
}

.omnibox {
    width: 766px;
    height: 28px;
    margin-left: 6px;
    background-color: #202124;
    border-radius: 14px;
    display: flex;
    align-items: center;
    padding-left: 12px;
}

.lock {
    width: 14px;
    height: 14px;
    margin-right: 8px;
}

.url {
    flex: 1;
    font-family: "Noto Sans", sans-serif;
    font-size: 13.5px;
    letter-spacing: -0.15px;
    color: #9aa0a6;
    white-space: nowrap;
}

.host {
    color: #e8eaed;
}

.omni-ic {
    width: 18px;
    height: 18px;
    margin-right: 14px;
}

.omni-ic.star {
    margin-right: 9px;
}

.exts {
    display: flex;
    margin-left: 6px;
}

.ext {
    width: 32px;
    height: 32px;
    display: flex;
    align-items: center;
    justify-content: center;
}

.ext svg {
    width: 16px;
    height: 16px;
    overflow: visible;
}

.abp {
    font: bold 6.500px "Liberation Sans", sans-serif;
    fill: #fff;
    text-anchor: middle;
}

.abp-n {
    font: bold 9px "Liberation Sans", sans-serif;
    fill: #fff;
    text-anchor: middle;
}

.gt {
    font: bold 7px "Liberation Sans", sans-serif;
    fill: #fff;
    text-anchor: middle;
}

.getcrx {
    font: 7px/8px "Liberation Sans", sans-serif;
    color: #77797d;
    text-align: center;
}

.bs-ext {
    width: 16px;
    height: 16px;
    background-color: #fff;
    color: #6a6ad8;
    font: bold 9px/16px "Liberation Sans", sans-serif;
    text-align: center;
}

.ava-s {
    width: 22px;
    height: 22px;
    border-radius: 50%;
    background-color: #455a64;
    color: #e8eaed;
    font: 12px/22px "Noto Sans", sans-serif;
    text-align: center;
}

.bookmarks {
    height: 34px;
    flex-shrink: 0;
    background-color: #35363a;
    display: grid;
    grid-template-columns: 85px 71px 153px 82px 154px 134px 136px 154px 149px 140px 1fr;
    align-items: center;
    padding-left: 15px;
    padding-bottom: 4px;
    font-family: "Noto Sans", sans-serif;
    font-size: 12px;
    letter-spacing: -0.33px;
    color: #e8eaed;
}

.bm {
    display: flex;
    align-items: center;
    gap: 8px;
    white-space: nowrap;
}

.bm:first-child {
    gap: 7px;
}

.bm svg {
    width: 16px;
    height: 16px;
}

.dd {
    width: 16px;
    color: #1a73e8;
    font: bold 14px "Liberation Sans", sans-serif;
    letter-spacing: 0;
}

.bm-more {
    font-size: 14px;
    text-align: right;
    padding-right: 17px;
}

/* gmail header */
.gm-header {
    height: 65px;
    flex-shrink: 0;
    display: flex;
    align-items: center;
    padding-top: 2px;
    border-bottom: 1px solid #eceff1;
}

.ic24 {
    width: 24px;
    height: 24px;
}

.gm-brand {
    width: 256px;
    display: flex;
    align-items: center;
    padding-left: 24px;
}

.gm-logo {
    width: 30px;
    height: 22px;
    margin-left: 17px;
}

.gm-word {
    margin-left: 13px;
    margin-bottom: 2px;
    font-family: "Open Sans", sans-serif;
    font-size: 22px;
    color: #5f6368;
    letter-spacing: -0.6px;
}

.search {
    width: 722px;
    height: 48px;
    background-color: #f1f3f4;
    border-radius: 8px;
    display: flex;
    align-items: center;
    padding: 0 17px 0 17px;
}

.search-text {
    flex: 1;
    margin-left: 16px;
    font-size: 16px;
    color: #80868b;
}

.gm-actions {
    flex: 1;
    display: flex;
    align-items: center;
    justify-content: flex-end;
    padding-right: 18px;
    gap: 20px;
}

.gm-avatar {
    width: 32px;
    height: 32px;
    border-radius: 50%;
    background-color: #455a64;
    color: #fff;
    font: 18px/32px Roboto, sans-serif;
    text-align: center;
}

.gm-main {
    flex: 1;
    display: flex;
    min-height: 0;
}

/* sidebar */
.sidebar {
    width: 256px;
    flex-shrink: 0;
    display: flex;
    flex-direction: column;
}

.compose {
    width: 145px;
    height: 48px;
    margin: 16px 0 0 8px;
    flex-shrink: 0;
    display: flex;
    align-items: center;
    padding: 0;
    background-color: #fff;
    border: none;
    border-radius: 24px;
    box-shadow: 0 1px 2px 0 rgba(60, 64, 67, 0.3), 0 1px 3px 1px rgba(60, 64, 67, 0.15);
    font-family: "Open Sans", sans-serif;
    font-size: 14px;
    letter-spacing: 0.25px;
    color: #3c4043;
}

.compose-plus {
    width: 24px;
    height: 24px;
    margin: 0 16px;
}

.compose-text {
    margin-bottom: 4px;
}

.labels {
    height: 189px;
    margin-top: 16px;
    flex-shrink: 0;
    overflow: hidden;
}

.label {
    height: 32px;
    width: 240px;
    display: flex;
    align-items: center;
    padding: 0 12px 0 26px;
    font-size: 14px;
    color: #3c4043;
    letter-spacing: 0.2px;
}

.label svg {
    width: 20px;
    height: 20px;
    margin-right: 18px;
}

.labels .label {
    padding-bottom: 2px;
}

.labels .label svg, .labels .label em {
    margin-top: 2px;
}

.labels .label:last-child {
    padding-bottom: 0;
}

.labels .label:last-child svg {
    margin-top: 0;
}

.label em {
    margin-left: auto;
    font-style: normal;
    font-size: 12px;
}

.label.on {
    background-color: #fce8e6;
    border-radius: 0 16px 16px 0;
    color: #d93025;
    font-weight: 700;
}

.label.on em {
    font-weight: 700;
}

.label.bold {
    font-weight: 700;
    color: #202124;
}

.label.bold em {
    font-weight: 400;
    color: #5f6368;
}

.meet {
    height: 112px;
    flex-shrink: 0;
    border-top: 2px solid #eceff1;
    border-bottom: 1px solid #e8eaed;
}

.meet h3, .hangouts h3 {
    padding-left: 26px;
    font-family: "Open Sans", sans-serif;
    font-size: 14px;
    font-weight: 400;
    letter-spacing: 0.1px;
    color: #3c4043;
}

.meet h3 {
    height: 38px;
    line-height: 42px;
}

.hangouts {
    height: 158px;
    flex-shrink: 0;
    display: flex;
    flex-direction: column;
}

.hangouts h3 {
    height: 40px;
    line-height: 45px;
}

.hg-user {
    height: 39px;
    margin: 0 25px 0 23px;
    display: flex;
    align-items: flex-start;
    font-size: 13px;
    color: #444;
}

.hg-avatar {
    position: relative;
    width: 28px;
    height: 28px;
    border-radius: 50%;
    background-color: #455a64;
    color: #fff;
    font: 14px/28px Roboto, sans-serif;
    text-align: center;
}

.hg-avatar i {
    position: absolute;
    right: -3px;
    bottom: -3px;
    width: 10px;
    height: 10px;
    border-radius: 50%;
    background-color: #34ad1c;
}

.hg-name {
    margin: 6px 3px 0 5px;
}

.hg-user .caret {
    margin-top: 12px;
    border-top-color: #aaa;
}

.hg-plus {
    width: 14px;
    height: 14px;
    margin: 9px 0 0 auto;
}

.hg-list {
    flex: 1;
    margin: 0 16px 0 23px;
    border-top: 1px solid #e8eaed;
    display: flex;
}

.hg-empty {
    flex: 1;
    padding: 19px 0 0 0;
    font-size: 13px;
    line-height: 20px;
    color: #777;
    text-align: center;
}

.hg-empty a {
    display: block;
    color: #1a5fd4;
}

.hg-thumb {
    width: 8px;
    background-color: #bdbdbd;
}

.hg-tabs {
    height: 33px;
    flex-shrink: 0;
    border-top: 1px solid #e8eaed;
    display: flex;
    justify-content: flex-end;
    padding-right: 91px;
}

.hg-tab {
    width: 37px;
    display: flex;
    align-items: center;
    justify-content: center;
}

.hg-tab.on {
    background-color: #f5f5f5;
}

/* message pane */
.content {
    position: relative;
    flex: 1;
    min-width: 0;
    overflow: hidden;
}

.mail-tools {
    position: relative;
    z-index: 1;
    width: 1038px;
    height: 47px;
    background-color: #fff;
    display: flex;
    align-items: center;
    box-shadow: 0 2px 2px -1px rgba(0, 0, 0, 0.2);
    padding: 0 22px 0 16px;
}

.ic20 {
    width: 20px;
    height: 20px;
}

.back {
    margin-right: 36px;
}

.tool-group {
    height: 20px;
    display: flex;
    gap: 24px;
    padding-right: 19px;
    margin-right: 20px;
    border-right: 1px solid #e8eaed;
}

.tool-group.last {
    border-right: none;
    padding-right: 0;
    margin-right: 0;
}

.dots {
    margin-left: -4px;
}

.pager {
    margin-left: auto;
    font-size: 12px;
    letter-spacing: 0.2px;
    color: #5f6368;
    margin-right: 20px;
}

.pg-ic {
    margin-right: 20px;
}

.kbd {
    width: 18px;
    height: 10px;
    margin-left: -3px;
    margin-right: 7px;
}

.caret {
    width: 0;
    height: 0;
    border: 4px solid transparent;
    border-top: 4px solid #5f6368;
    border-bottom: none;
}

.sender {
    height: 40px;
    margin: -15px 0 0 16px;
    display: flex;
    align-items: flex-end;
    font-size: 12px;
    color: #5f6368;
}

.sender-pic {
    width: 40px;
    height: 40px;
}

.to-me {
    margin-left: 16px;
    margin-right: 7px;
    line-height: 20px;
}

.sender .caret {
    margin-bottom: 7px;
}

.message {
    width: 700px;
    height: 284px;
    margin: 93px 0 0 222px;
    font-family: "Liberation Sans", Arial, sans-serif;
    font-weight: 700;
    color: #1a1a1a;
    border-top: 1px solid #eee;
    border-bottom: 1px solid #eee;
}

.hi {
    margin-top: 24px;
    font-size: 16px;
    line-height: 20px;
}

.lead {
    margin-top: 22px;
    font-size: 15px;
    line-height: 31px;
    letter-spacing: 0.1px;
}

.otp-row {
    margin-top: 15px;
    display: flex;
    justify-content: center;
}

.otp {
    width: 96px;
    height: 46px;
    background-color: #00466a;
    border-radius: 4px;
    color: #fff;
    font-size: 23px;
    line-height: 46px;
    text-align: center;
}

.bye {
    margin: 19px 0 0 1px;
    font-size: 13.5px;
    line-height: 16px;
}

.sign {
    margin: 10px 0 0 21px;
    color: #00466a;
    font-size: 19px;
    line-height: 28px;
}

.v-thumb {
    position: absolute;
    right: 0;
    top: 105px;
    width: 11px;
    height: 317px;
    background-color: #c8c8c8;
    border-left: 1px solid #b0b0b0;
    border-top: 1px solid #b0b0b0;
}

.h-thumb {
    position: absolute;
    left: 0;
    bottom: 0;
    width: 990px;
    height: 11px;
    background-color: #c8c8c8;
    border-top: 1px solid #b0b0b0;
}

/* right rail */
.rail {
    width: 56px;
    flex-shrink: 0;
    border-left: 1px solid #eceff1;
    display: flex;
    flex-direction: column;
    align-items: center;
    padding: 18px 0 0 0;
}

.rail-ic {
    width: 20px;
    height: 20px;
    margin-bottom: 36px;
}

.cal {
    font: bold 8px Roboto, sans-serif;
    fill: #4285f4;
    text-anchor: middle;
}

.rail-sep {
    width: 22px;
    margin: -2px 0 0;
    border: none;
    border-top: 1px solid #dadce0;
}

.rail-add {
    width: 14px;
    height: 14px;
    margin-top: 37px;
}

.rail-more {
    width: 20px;
    height: 20px;
    margin-top: auto;
    margin-bottom: 18px;
}

/* taskbar */
.taskbar {
    height: 30px;
    flex-shrink: 0;
    background-color: #1c1e23;
    display: flex;
    justify-content: space-between;
    color: #fff;
}

.tb-apps {
    display: grid;
    grid-template-columns: 36px 37px 32px 42px 36px 38px 36px 38px 36px 36px;
}

.tb-app {
    height: 30px;
    display: flex;
    align-items: center;
    justify-content: center;
}

.tb-app > svg {
    width: 16px;
    height: 16px;
}

.tb-app.run {
    background-color: #4a4c50;
    border-bottom: 2px solid #76b9ed;
}

.tb-app.run2 {
    margin: 0 4px;
    border-bottom: 2px solid #76b9ed;
}

.tb-tray {
    display: flex;
    align-items: center;
    font-family: "Noto Sans", sans-serif;
    font-size: 13.500px;
    letter-spacing: -0.2px;
}

.weather {
    width: 22px;
    height: 22px;
    margin-right: 10px;
}

.smoke {
    margin-left: 9px;
}

.tray-ic {
    width: 14px;
    height: 14px;
    margin-left: 10px;
}

.tray-ic.first {
    margin-left: 10px;
    margin-right: 2px;
}

.clock {
    margin-left: 12px;
    font-size: 12px;
    letter-spacing: -0.5px;
}

.notif {
    width: 18px;
    height: 16px;
    margin: 0 24px 0 21px;
}
```
